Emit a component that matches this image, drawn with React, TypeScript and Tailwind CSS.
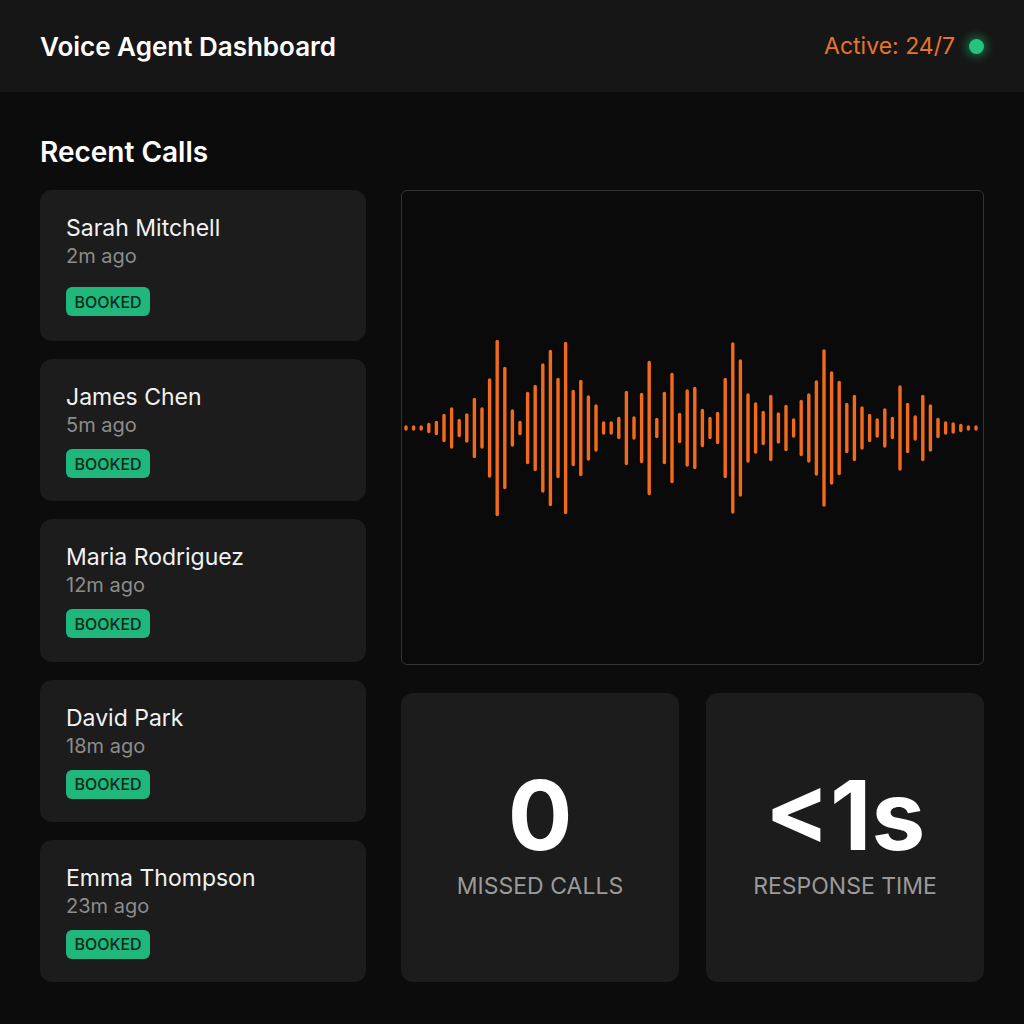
const calls = [
  { name: 'Sarah Mitchell', time: '2m ago' },
  { name: 'James Chen', time: '5m ago' },
  { name: 'Maria Rodriguez', time: '12m ago' },
  { name: 'David Park', time: '18m ago' },
  { name: 'Emma Thompson', time: '23m ago' },
];

// bar heights in px, left to right
const bars = [
  2, 2, 2, 7, 11, 25, 38, 15, 26, 57, 38, 96, 173, 119, 34, 11, 69, 83, 126, 153,
  97, 169, 73, 93, 62, 44, 10, 10, 19, 71, 20, 67, 131, 17, 69, 107, 27, 74, 79, 35,
  19, 29, 97, 168, 134, 66, 48, 31, 63, 28, 43, 16, 53, 66, 92, 154, 110, 91, 47, 63,
  40, 25, 16, 36, 19, 82, 47, 22, 63, 44, 17, 10, 8, 5, 2, 2,
];

function Waveform() {
  const cy = 237;
  return (
    <svg width="581" height="473" viewBox="0 0 581 473" className="block">
      {bars.map((h, i) => {
        const x = 4 + i * 7.6;
        const half = Math.max(h, 2) / 2;
        return (
          <line
            key={i}
            x1={x}
            x2={x}
            y1={cy - half}
            y2={cy + half}
            stroke="#f26a1b"
            strokeWidth={3.4}
            strokeLinecap="round"
          />
        );
      })}
    </svg>
  );
}

function CallCard({ name, time, first }: { name: string; time: string; first?: boolean }) {
  return (
    <div
      className={
        first
          ? 'h-[151px] shrink-0 rounded-xl bg-[#1c1c1c] pl-[26px] pt-[24px]'
          : 'flex-1 rounded-xl bg-[#1c1c1c] pl-[26px] pt-[24px]'
      }
    >
      <div className="text-[23px] leading-[28px] text-[#f2f2f2]">{name}</div>
      <div className="text-[20px] leading-[28px] text-[#8c8c8c]">{time}</div>
      <div
        className={
          (first ? 'mt-[17px] ' : 'mt-[10px] ') +
          'inline-flex h-[29px] w-[84px] items-center justify-center rounded-md bg-[#1fb77b] text-[16px] font-medium text-[#0b2a1c]'
        }
      >
        BOOKED
      </div>
    </div>
  );
}

function StatCard({ value, label }: { value: string; label: string }) {
  return (
    <div className="flex flex-1 flex-col items-center justify-center rounded-xl bg-[#1c1c1c] pb-[8px]">
      <div className="text-[96px] font-bold leading-[96px] text-white">{value}</div>
      <div className="mt-[8px] text-[23px] leading-[30px] text-[#9a9a9a]">{label}</div>
    </div>
  );
}

export default function App() {
  return (
    <div
      className="flex h-[1024px] w-[1024px] flex-col bg-[#0c0c0c]"
      style={{ fontFamily: 'Inter, "Noto Sans", sans-serif' }}
    >
      <header className="flex h-[92px] items-center justify-between bg-[#161616] px-[40px]">
        <h1 className="text-[26px] font-semibold text-white">Voice Agent Dashboard</h1>
        <div className="flex items-center gap-[14px]">
          <span className="text-[23px] text-[#e8742c]">Active: 24/7</span>
          <span className="h-[15px] w-[15px] rounded-full bg-[#22c57a] shadow-[0_0_10px_3px_rgba(34,197,122,0.45)]" />
        </div>
      </header>

      <main className="flex flex-1 flex-col px-[40px] pb-[42px] pt-[42px]">
        <h2 className="mb-[20px] text-[28px] font-semibold leading-[36px] text-white">Recent Calls</h2>
        <div className="flex flex-1 gap-[35px]">
          <div className="flex w-[326px] flex-col gap-[18px]">
            {calls.map((c, i) => (
              <CallCard key={c.name} name={c.name} time={c.time} first={i === 0} />
            ))}
          </div>
          <div className="flex flex-1 flex-col gap-[28px]">
            <div className="flex h-[475px] items-center justify-center rounded-md border border-[#333333] bg-[#0a0a0a]">
              <Waveform />
            </div>
            <div className="flex flex-1 gap-[27px]">
              <StatCard value="0" label="MISSED CALLS" />
              <StatCard value="<1s" label="RESPONSE TIME" />
            </div>
          </div>
        </div>
      </main>
    </div>
  );
}
